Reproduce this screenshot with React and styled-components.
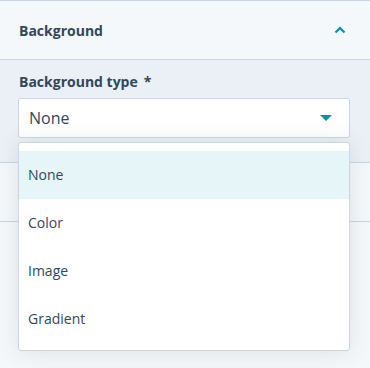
import styled, { createGlobalStyle } from "styled-components";

const GlobalStyle = createGlobalStyle`
  html, body {
    margin: 0;
    padding: 0;
    background: #f5f8fa;
    font-family: "Open Sans", "Noto Sans", sans-serif;
    color: #33475b;
  }
`;

const Page = styled.div`
  width: 370px;
  height: 368px;
  border-top: 1px solid #cbd6e2;
  box-sizing: border-box;
  background: #f5f8fa;
`;

const Section = styled.div`
  border-bottom: 1px solid #cbd6e2;
`;

const SectionHeader = styled.div`
  height: 58px;
  padding: 0 24px 0 19px;
  display: flex;
  align-items: center;
  justify-content: space-between;
  background: #f5f8fa;
  border-bottom: ${(p) => (p.open ? "1px solid #cbd6e2" : "none")};
  font-size: 14px;
  font-weight: 700;
`;

const SectionBody = styled.div`
  position: relative;
  background: #eaf0f6;
  padding: 12px 20px 24px 18px;
`;

const Label = styled.div`
  font-size: 14px;
  font-weight: 700;
  line-height: 20px;
  padding-left: 1px;
  margin-bottom: 6px;

  span {
    margin-left: 6px;
  }
`;

const Select = styled.div`
  height: 40px;
  box-sizing: border-box;
  display: flex;
  align-items: center;
  justify-content: space-between;
  padding: 0 17px 0 10px;
  background: #fff;
  border: 1px solid #cbd6e2;
  border-radius: 3px;
  font-size: 16px;
`;

const Menu = styled.ul`
  position: absolute;
  left: 18px;
  right: 20px;
  top: 82px;
  z-index: 2;
  margin: 0;
  padding: 8px 0 7px;
  list-style: none;
  background: #fff;
  border: 1px solid #cbd6e2;
  border-radius: 3px;
  box-shadow: 0 1px 24px 0 rgba(45, 62, 80, 0.12);
`;

const MenuItem = styled.li`
  height: 48px;
  display: flex;
  align-items: center;
  padding: 0 0 1px 9px;
  box-sizing: border-box;
  font-size: 14px;
  background: ${(p) => (p.active ? "#e5f5f8" : "#fff")};
`;

const EmptyRow = styled.div`
  height: 58px;
  border-bottom: 1px solid #cbd6e2;
  background: #f5f8fa;
`;

const ChevronUp = () => (
  <svg width="12" height="8" viewBox="0 0 12 8">
    <path d="M1.5 6.5 L6 2 L10.5 6.5" fill="none" stroke="#0091ae" strokeWidth="2.2" />
  </svg>
);

const Caret = () => (
  <svg width="12" height="6" viewBox="0 0 12 6">
    <path d="M0 0 H12 L6 6 Z" fill="#0091ae" />
  </svg>
);

const options = ["None", "Color", "Image", "Gradient"];

export default function App() {
  return (
    <>
      <GlobalStyle />
      <Page>
        <Section>
          <SectionHeader open>
            Background
            <ChevronUp />
          </SectionHeader>
          <SectionBody>
            <Label>
              Background type<span>*</span>
            </Label>
            <Select>
              None
              <Caret />
            </Select>
            <Menu>
              {options.map((o, i) => (
                <MenuItem key={o} active={i === 0}>
                  {o}
                </MenuItem>
              ))}
            </Menu>
          </SectionBody>
        </Section>
        <EmptyRow />
      </Page>
    </>
  );
}
